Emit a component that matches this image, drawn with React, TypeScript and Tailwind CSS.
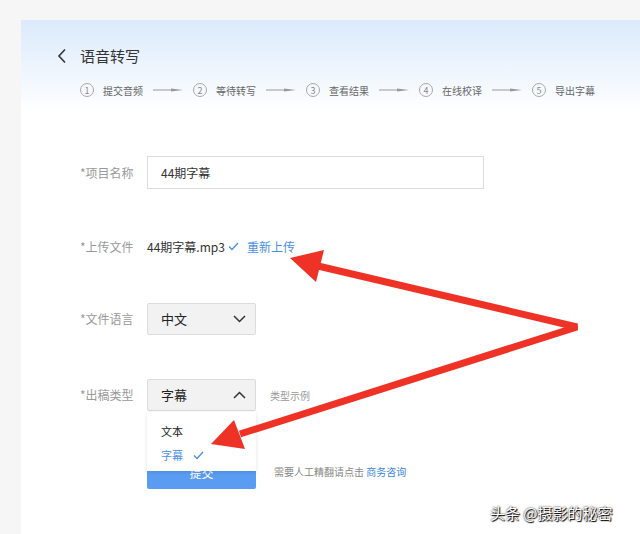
import React from 'react';

const steps = ['提交音频', '等待转写', '查看结果', '在线校译', '导出字幕'];

const font = { fontFamily: '"Noto Sans CJK SC", "Noto Sans", sans-serif' };

const StepArrow = () => (
  <svg width="30" height="6" viewBox="0 0 30 6" className="mx-[10px]">
    <line x1="0" y1="3" x2="22" y2="3" stroke="#999" strokeWidth="1" />
    <polygon points="18,1.4 30,3 18,4.6" fill="#999" />
  </svg>
);

const Chevron = ({ up }: { up?: boolean }) => (
  <svg width="13" height="8" viewBox="0 0 13 8">
    <polyline
      points={up ? '1,7 6.5,1.5 12,7' : '1,1 6.5,6.5 12,1'}
      fill="none"
      stroke="#333"
      strokeWidth="1.5"
    />
  </svg>
);

const Check = ({ color }: { color: string }) => (
  <svg width="11" height="9" viewBox="0 0 11 9">
    <polyline points="1,4.5 4,7.5 10,1" fill="none" stroke={color} strokeWidth="1.3" />
  </svg>
);

export default function App() {
  return (
    <div className="relative w-[640px] h-[534px] overflow-hidden bg-[#f6f6f6]" style={font}>
      <div className="ml-[21px] mt-[20px] h-[514px] bg-gradient-to-b from-[#dbeafb] via-white via-[18%] to-white">
        {/* header */}
        <div className="pl-[36px] pt-[26px]">
          <div className="flex items-center h-[20px]">
            <svg width="10" height="16" viewBox="0 0 10 16">
              <polyline points="8,1.5 2,8 8,14.5" fill="none" stroke="#333" strokeWidth="1.6" />
            </svg>
            <span className="ml-[13px] text-[15px] text-[#333]">语音转写</span>
          </div>
          <div className="flex items-center mt-[16px] pl-[23px] h-[16px]">
            {steps.map((s, i) => (
              <React.Fragment key={s}>
                <div className="flex items-center">
                  <span className="w-[14px] h-[14px] rounded-full border border-[#a8a8a8] text-[#8a8a8a] text-[9px] leading-none flex items-center justify-center">
                    {i + 1}
                  </span>
                  <span className="ml-[9px] text-[10px] text-[#666]">{s}</span>
                </div>
                {i < steps.length - 1 && <StepArrow />}
              </React.Fragment>
            ))}
          </div>
        </div>

        {/* form */}
        <div className="pl-[59px] pt-[58px] text-[12px]">
          <div className="flex items-center h-[33px]">
            <span className="w-[67px] text-[#999]">*项目名称</span>
            <div className="w-[337px] h-[33px] border border-[#dcdcdc] bg-white flex items-center pl-[13px] text-[#333]">
              44期字幕
            </div>
          </div>

          <div className="flex items-center h-[33px] mt-[41px]">
            <span className="w-[67px] text-[#999]">*上传文件</span>
            <span className="text-[#333]">44期字幕.mp3</span>
            <span className="ml-[3px] flex items-center">
              <Check color="#4a8fe0" />
            </span>
            <span className="ml-[8px] text-[#4a8fe0]">重新上传</span>
          </div>

          <div className="flex items-center h-[32px] mt-[40px]">
            <span className="w-[67px] text-[#999]">*文件语言</span>
            <div className="w-[109px] h-[32px] border border-[#dcdcdc] rounded-[2px] bg-[#f2f2f2] flex items-center justify-between pl-[13px] pr-[9px] text-[13px] text-[#222]">
              中文
              <Chevron />
            </div>
          </div>

          <div className="relative flex items-center h-[32px] mt-[44px]">
            <span className="w-[67px] text-[#999]">*出稿类型</span>
            <div className="w-[109px] h-[32px] border border-[#dcdcdc] rounded-[2px] bg-[#f2f2f2] flex items-center justify-between pl-[13px] pr-[9px] text-[13px] text-[#222]">
              字幕
              <Chevron up />
            </div>
            <span className="ml-[14px] text-[10px] text-[#999]">类型示例</span>

            <div className="absolute left-[67px] top-[33px] z-10 w-[109px] h-[59px] bg-white shadow-[0_1px_4px_rgba(0,0,0,0.12)] flex flex-col pl-[14px] pt-[9px] text-[11px]">
              <span className="h-[20px] leading-[20px] text-[#222]">文本</span>
              <span className="h-[20px] mt-[4px] flex items-center text-[#4a8fe0]">
                字幕
                <span className="ml-[10px]">
                  <Check color="#4a8fe0" />
                </span>
              </span>
            </div>
          </div>

          <div className="flex items-center h-[32px] mt-[46px]">
            <span className="w-[67px]" />
            <div className="w-[109px] h-[32px] rounded-[2px] bg-[#5a9cf2] flex items-center justify-center text-white text-[12px]">
              提交
            </div>
            <span className="ml-[18px] -mt-[4px] text-[10px] text-[#888]">
              需要人工精翻请点击 <span className="text-[#3a84de]">商务咨询</span>
            </span>
          </div>
        </div>
      </div>

      {/* annotation arrows */}
      <svg className="absolute inset-0 z-20 pointer-events-none" width="640" height="534" viewBox="0 0 640 534">
        <polyline
          points="318,266 577,327 240,434"
          fill="none"
          stroke="#ee3326"
          strokeWidth="7"
          strokeLinejoin="bevel"
        />
        <polygon points="290,258 324,250 316,282" fill="#ee3326" />
        <polygon points="211,444 234,420 245,449" fill="#ee3326" />
      </svg>

      <span
        className="absolute z-30 left-[490px] top-[502px] text-[15px] text-white"
        style={{ textShadow: '0 0 2px #000, 1px 1px 1px #000' }}
      >
        头条 @摄影的秘密
      </span>
    </div>
  );
}
